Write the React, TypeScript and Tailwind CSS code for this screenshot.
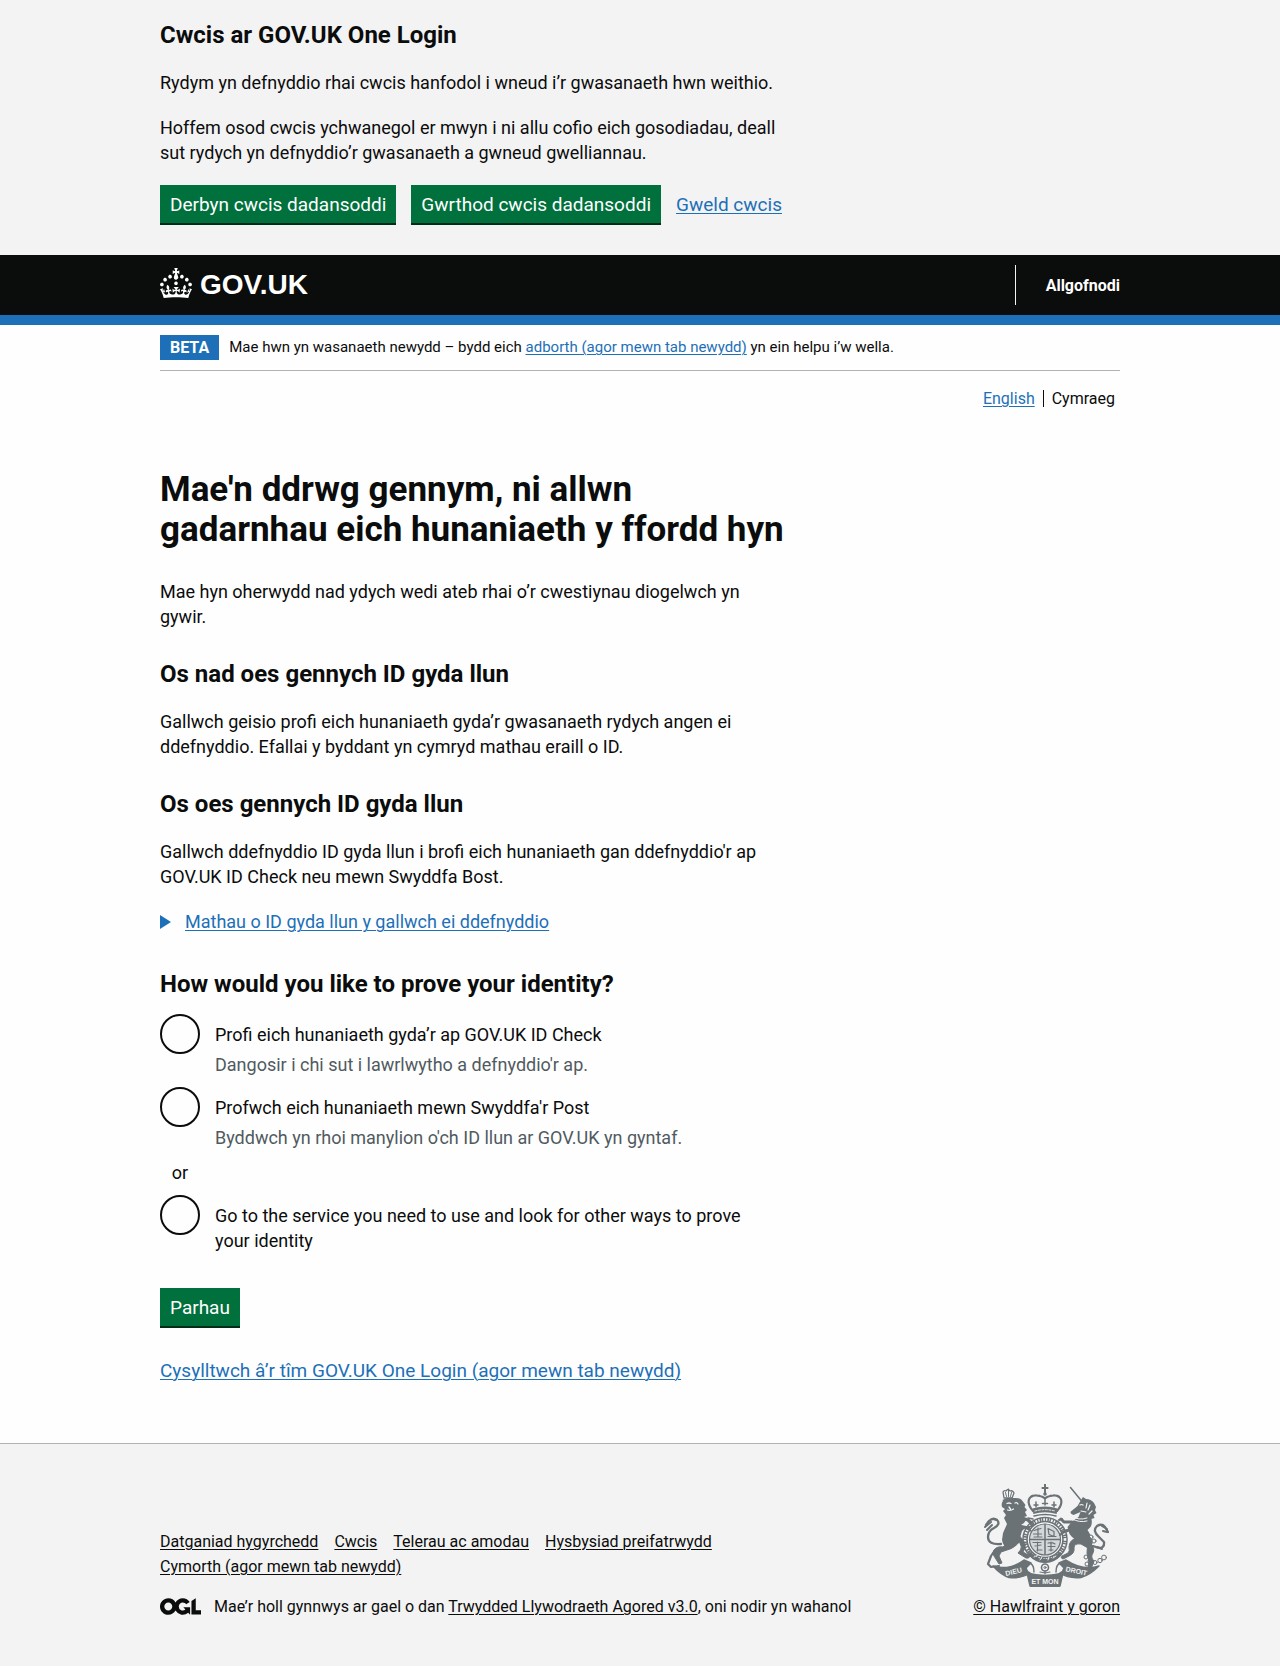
import React from 'react';

const linkClass = 'text-[#1d70b8] underline underline-offset-2 decoration-1 hover:decoration-2';
const footerLinkClass = 'text-[#0b0c0c] underline underline-offset-2 decoration-1';

function Crown() {
  return (
    <svg viewBox="0 0 32 30" width="32" height="30" fill="currentColor" aria-hidden="true">
      <path
        fillRule="evenodd"
        d="M22.6 10.4c-1 .4-2-.1-2.4-1-.4-.9.1-2 1-2.4.9-.4 2 .1 2.4 1s-.1 2-1 2.4m-5.9 6.7c-.9.4-2-.1-2.4-1-.4-.9.1-2 1-2.4.9-.4 2 .1 2.4 1s-.1 2-1 2.4m10.8-3.7c-1 .4-2-.1-2.4-1-.4-.9.1-2 1-2.4.9-.4 2 .1 2.4 1s0 2-1 2.4m3.3 4.8c-1 .4-2-.1-2.4-1-.4-.9.1-2 1-2.4.9-.4 2 .1 2.4 1s-.1 2-1 2.4M17 4.7l2.3 1.2V2.5l-2.3.7-.2-.2.9-3h-3.4l.9 3-.2.2c-.1.1-2.3-.7-2.3-.7v3.4L15 4.7c.1.1.1.2.2.2l-1.3 4c-.1.2-.1.4-.1.6 0 1.1.8 2 1.9 2.2h.7c1-.2 1.9-1.1 1.9-2.1 0-.2 0-.4-.1-.6l-1.3-4c-.1-.2 0-.2.1-.3m-7.6 5.7c.9.4 2-.1 2.4-1 .4-.9-.1-2-1-2.4-.9-.4-2 .1-2.4 1s0 2 1 2.4m-5 3c.9.4 2-.1 2.4-1 .4-.9-.1-2-1-2.4-.9-.4-2 .1-2.4 1s.1 2 1 2.4m-3.2 4.8c.9.4 2-.1 2.4-1 .4-.9-.1-2-1-2.4-.9-.4-2 .1-2.4 1s0 2 1 2.4m14.8 11c4.4 0 8.6.3 12.3.8 1.1-4.5 2.4-7 3.7-8.8l-2.5-.9c.2 1.3.3 1.9 0 2.7-.4-.4-.8-1.1-1.1-2.3l-1.2 4c.7-.5 1.3-.8 2-.9-1.1 2.5-2.6 3.1-3.5 3-1.1-.2-1.7-1.2-1.5-2.1.3-1.2 1.5-1.5 2.1-.1 1.1-2.3-.8-3-2-2.3 1.9-1.9 2.1-3.5.6-5.6-2.1 1.6-2.1 3.2-1.2 5.5-1.2-1.4-3.2-.6-2.5 1.6.9-1.4 2.1-.5 1.9.8-.2 1.1-1.7 2.1-3.5 1.9-2.7-.2-2.9-2.1-2.9-3.6.7-.1 1.9.5 2.9 1.9l.4-4.3c-1.1 1.1-2.1 1.4-3.2 1.4.4-1.2 2.1-3 2.1-3h-5.4s1.7 1.9 2.1 3c-1.1 0-2.1-.2-3.2-1.4l.4 4.3c1-1.4 2.2-2 2.9-1.9-.1 1.5-.2 3.4-2.9 3.6-1.9.2-3.4-.8-3.5-1.9-.2-1.3 1-2.2 1.9-.8.7-2.3-1.2-3-2.5-1.6.9-2.2.9-3.9-1.2-5.5-1.5 2-1.3 3.7.6 5.6-1.2-.7-3.1 0-2 2.3.6-1.4 1.8-1.1 2.1.1.2.9-.3 1.9-1.5 2.1-.9.2-2.4-.5-3.5-3 .6 0 1.2.3 2 .9l-1.2-4c-.3 1.1-.7 1.9-1.1 2.3-.3-.8-.2-1.4 0-2.7l-2.9.9C1.3 23 2.6 25.5 3.7 30c3.7-.5 7.9-.8 12.3-.8"
      />
    </svg>
  );
}

function OglLogo() {
  return (
    <svg viewBox="0 0 483.2 195.7" width="41" height="17" fill="currentColor" className="shrink-0" aria-hidden="true">
      <path d="M421.5 142.8V.1l-50.7 32.3v161.1h112.4v-50.7zm-122.3-9.6A47.12 47.12 0 0 1 221 97.8c0-26 21.1-47.1 47.1-47.1 16.7 0 31.4 8.7 39.7 21.8l42.7-27.2A97.63 97.63 0 0 0 268.1 0c-36.5 0-68.3 20.1-85.1 49.7A98 98 0 0 0 97.8 0C43.9 0 0 43.9 0 97.8s43.9 97.8 97.8 97.8c36.5 0 68.3-20.1 85.1-49.7a97.76 97.76 0 0 0 149.6 25.4l19.4 22.2h3v-87.8h-80l24.3 27.5zM97.8 145c-26 0-47.1-21.1-47.1-47.1s21.1-47.1 47.1-47.1 47.1 21.1 47.1 47.1S123.8 145 97.8 145" />
    </svg>
  );
}

function Crest() {
  return (
    <svg viewBox="0 0 125 103" width="125" height="103" fill="none" stroke="#6b7276" strokeLinecap="round" strokeLinejoin="round" aria-hidden="true">
      {/* royal crown */}
      <g>
        <path d="M61 0.5v9M58.4 4h5.2" strokeWidth="2" />
        <circle cx="61" cy="10" r="1.8" fill="#6b7276" stroke="none" />
        <path d="M49 27C42 19 44 12 51 11.500c5-.3 9 2 10 3 1-1 5-3.300 10-3 7 .5 9 7.500 2 15.500" strokeWidth="2.200" strokeDasharray="2.600 .5" />
        <path d="M61 14v7M58.500 19.500h5M52 18v5M50 21h4M70 18v5M68 21h4" strokeWidth="1.500" />
        <path d="M48.500 24.500q12.500-4 25 0l-.8 5.500q-11.700-3.500-23.400 0z" fill="#6b7276" stroke="none" />
        <path d="M51 27q10-2.700 20 0" stroke="#f3f3f3" strokeWidth=".9" strokeDasharray="2 1.500" />
        <path d="M50 32q11-3 22 0" strokeWidth="1.500" />
      </g>
      {/* garter and shield */}
      <circle cx="61" cy="55.500" r="20" strokeWidth="5.600" />
      <circle cx="61" cy="55.500" r="20" stroke="#f3f3f3" strokeWidth="2.600" strokeLinecap="butt" strokeDasharray="1.300 1.600 .7 1.300 1.800 1.200" />
      <circle cx="61" cy="55.500" r="15.500" fill="#d5d8d9" strokeWidth="1.200" />
      <path d="M61 40.500v30M46 55.500h30" strokeWidth="1.500" />
      <path d="M50 46.500l7-2M49.500 50h8M50 53h8M64 44.500l6 3v5l-5-2zM64 52.500h8M49 58.500h8M51 62l6-1M53 66h5M64 59q4-1 7 1M64 62.500h7M65 66h4M67 58v9M53.500 58v9M54 44v9" strokeWidth="1.200" />
      <path d="M46 70q7 7.500 15 7 8 .5 15-7" strokeWidth="4" />
      <path d="M50 73l4-2M56 76l2-3M64 76l1-3M69 74l3-2" stroke="#f3f3f3" strokeWidth=".9" />
      {/* lion */}
      <g>
        <path d="M19 8q1-2 3-1 2-3 4 0 3-1 4 2l-2 5h-8z" strokeWidth="1.300" />
        <path d="M21.500 8.500l1 4M24.500 6v6.500M27.500 8.500l-1 4M24.500 5v1" strokeWidth="1" />
        <path d="M18.500 16q5-3 11-2 7-.5 9 3l3 4-1 2 2.500 3-2 2 2 4-3 1 2 3-2 3-3 2 4 3-3 3-2 7q-3 2-4 5-2 5-7 6-6-2-7-9l1-7 4-9-3-6 2-3-3-4 2-2-3-2q-1-4 1-6z" fill="#6b7276" stroke="none" />
        <path d="M23 19.500q2-1 4 0M31 19q2-1 3 1M23.500 26q3 1 6-1M25 23l1.500 2" stroke="#f3f3f3" strokeWidth="1.300" />
        <path d="M27 50q-1 8-8 13-6-1-9 3-2 3 0 6l5 8 3-1-3-7 2-4 6-2q8-2 13-9z" fill="#6b7276" strokeWidth="1" />
        <path d="M27 50l6 6q8 7 1 13l8 5q3 1 4-2l-7-4q5-7-1-13l-4-5z" fill="#6b7276" strokeWidth="1" />
        <path d="M17 60Q4 61 4 53q0-6 6-9 7-4 3-8-4-3-8 1l-3 4" strokeWidth="2.300" />
        <path d="M1 43l6-5M3 46l5-5M13 36l-4-1" strokeWidth="2" />
        <path d="M35 33l9 3 3 3M35 42l9 2" strokeWidth="3.200" />
        <path d="M44 34l5 1M47 39l2 2M44 44l3 3M44 43l4-1" strokeWidth="1.600" />
        <path d="M11 66l-4 6-3 8 3 3 8-1" strokeWidth="2.200" />
      </g>
      {/* unicorn */}
      <g>
        <path d="M86.500 3.500L98 17.500" strokeWidth="1.500" />
        <path d="M97 16l2-3 3 2q5 0 8 4l2 4-1 3 1.500 3-3 2 1 3-3 1q1 5-1 8l-3 3 3 5q-4 5-9 6-8-1-12-7l-2-7 4-5 7-5 2-5-7 3-2-1q-2-2 0-3l6-5z" fill="#6b7276" stroke="none" />
        <path d="M96 21q2-1 3 0M103 19l-1 5M106 21l-2 5M108 27l-3 3M97 27l5 1" stroke="#f3f3f3" strokeWidth="1.200" />
        <path d="M87 32q8 5 16 2M88 35q8 4 15 2" stroke="#f3f3f3" strokeWidth="1" />
        <path d="M88 38l-8 0-3-3M88 45l-9 3" strokeWidth="3" />
        <path d="M78 35l-3 1M79 48l-3 3" strokeWidth="2" />
        <path d="M94 50l10 1q5 4 4 9l-4 4-7-4q-7-1-7 4 1 5-5 8l-6 3q-3-1-1-3l6-3q2-2 1-6 0-7 9-10z" fill="#6b7276" strokeWidth="1" />
        <path d="M104 58q8 5 5 11-3 4 1 8l-3 8-3 1 1-8-2-9q0-4 1-8z" fill="#6b7276" strokeWidth="1" />
        <path d="M109 62q12 5 11-4l-5-5q-7-6-2-11 5-3 8 1l3 5" strokeWidth="2.300" />
        <path d="M118 42l5 3M119 47l4 1M113 63l5 2" strokeWidth="2" />
        <g strokeWidth="1">
          <circle cx="102" cy="73" r="2" /><circle cx="106" cy="77" r="2" /><circle cx="111" cy="78.500" r="2" />
          <circle cx="116" cy="76.500" r="2.200" /><circle cx="120" cy="73.500" r="2.400" /><circle cx="103" cy="80" r="2" />
          <circle cx="107" cy="53" r="2" /><circle cx="110" cy="57" r="2" />
        </g>
      </g>
      {/* motto scroll */}
      <g strokeWidth="1.400" fill="#6b7276">
        <path d="M9 82q16 5 31-6l7 3-5 5q1 4 4 5-9 6-21 4.500-8-2.500-16-11.500z" />
        <path d="M115 82q-16 5-33-6l-7 3 5 5q-1 4-4 5 9 6 21 4.500 9-2.500 18-11.500z" />
        <path d="M43 89q18 5 36 0l-3 13q-15 3-30 0z" />
        <path d="M46 79q4 2 4 9M76 79q-4 2-4 9" fill="none" />
      </g>
      <g fill="#f3f3f3" stroke="none" fontFamily="Liberation Sans, sans-serif" fontWeight="700" fontSize="7">
        <text x="30" y="90" textAnchor="middle" transform="rotate(-14 30 89)">DIEU</text>
        <text x="92" y="89.500" textAnchor="middle" transform="rotate(12 92 89)">DROIT</text>
        <text x="61" y="99.500" textAnchor="middle">ET MON</text>
      </g>
      <circle cx="61" cy="83.500" r="3.500" strokeWidth="1.600" />
      <circle cx="61" cy="83.500" r="1" strokeWidth="1" />
      <path d="M61 87v3M56 88l5 1 5-1" strokeWidth="1.200" />
    </svg>
  );
}

function Button({ children, type = 'button' }: { children: React.ReactNode; type?: 'button' | 'submit' }) {
  return (
    <button type={type} className="h-[38px] bg-[#00703c] px-[10px] text-[19px] leading-[19px] text-white shadow-[0_2px_0_#002d18]">
      {children}
    </button>
  );
}

function Heading({ children }: { children: React.ReactNode }) {
  return <h2 className="mb-5 text-[24px] leading-[30px] font-bold">{children}</h2>;
}

function Option({ id, label, hint }: { id: string; label: string; hint?: string }) {
  return (
    <div className="flex gap-[15px]">
      <input
        type="radio"
        name="identity"
        id={id}
        aria-describedby={hint ? id + '-hint' : undefined}
        className="size-10 shrink-0 appearance-none rounded-full border-2 border-[#0b0c0c] checked:border-[12px]"
      />
      <div className="pt-2 pr-[15px]">
        <label htmlFor={id} className="block">{label}</label>
        {hint && <p id={id + '-hint'} className="pt-[5px] text-[#505a5f]">{hint}</p>}
      </div>
    </div>
  );
}

const container = 'mx-5 min-[1020px]:mx-auto max-w-[960px]';

export default function App() {
  return (
    <div className="bg-[#f3f3f3] font-['Roboto',sans-serif] text-[18px] leading-[25px] text-[#0b0c0c]">
      <section aria-label="Cwcis ar GOV.UK One Login" className="pt-5 pb-[30px]">
        <div className={container}>
          <div className="max-w-[630px]">
            <Heading>Cwcis ar GOV.UK One Login</Heading>
            <p className="mb-5">Rydym yn defnyddio rhai cwcis hanfodol i wneud i’r gwasanaeth hwn weithio.</p>
            <p className="mb-5">
              Hoffem osod cwcis ychwanegol er mwyn i ni allu cofio eich gosodiadau, deall sut rydych yn defnyddio’r gwasanaeth a gwneud gwelliannau.
            </p>
          </div>
          <div className="flex flex-wrap items-center gap-x-[15px] gap-y-3 pb-[2px]">
            <Button>Derbyn cwcis dadansoddi</Button>
            <Button>Gwrthod cwcis dadansoddi</Button>
            <a href="#cwcis" className={'text-[19px] ' + linkClass}>Gweld cwcis</a>
          </div>
        </div>
      </section>

      <header className="border-b-[10px] border-[#1d70b8] bg-[#0b0c0c] text-white">
        <div className={container}>
          <div className="flex h-[60px] items-center justify-between">
            <a href="#gov" aria-label="GOV.UK" className="flex items-center gap-2 pb-1">
              <Crown />
              <span className="pt-1 font-['Liberation_Sans',sans-serif] text-[28px] leading-[30px] font-bold">GOV.UK</span>
            </a>
            <nav className="flex h-10 items-center border-l border-[#f3f3f3] pl-[30px]">
              <a href="#allgofnodi" className="text-[16px] font-bold">Allgofnodi</a>
            </nav>
          </div>
        </div>
      </header>

      <div className="bg-[#fefefe]">
        <div className={container}>
          <div className="flex items-center gap-[10px] border-b border-[#b1b4b6] py-[10px] text-[15px]">
            <strong className="bg-[#1d70b8] px-[10px] text-[16px] text-white">BETA</strong>
            <span>
              Mae hwn yn wasanaeth newydd – bydd eich <a href="#adborth" className={linkClass}>adborth (agor mewn tab newydd)</a> yn ein helpu i’w wella.
            </span>
          </div>
          <nav aria-label="Iaith" className="flex justify-end pt-[15px] pr-[5px] text-[16px]">
            <a href="#en" className={linkClass}>English</a>
            <span className="mx-2 my-1 w-px bg-[#0b0c0c]" />
            <span>Cymraeg</span>
          </nav>

          <main className="pt-[59px] pb-[60px]">
            <div className="max-w-[630px]">
              <h1 className="mb-[29px] text-[35px] leading-[40px] font-bold">
                Mae'n ddrwg gennym, ni allwn gadarnhau eich hunaniaeth y ffordd hyn
              </h1>
              <p className="mb-[30px]">Mae hyn oherwydd nad ydych wedi ateb rhai o’r cwestiynau diogelwch yn gywir.</p>
              <Heading>Os nad oes gennych ID gyda llun</Heading>
              <p className="mb-[30px]">
                Gallwch geisio profi eich hunaniaeth gyda’r gwasanaeth rydych angen ei ddefnyddio. Efallai y byddant yn cymryd mathau eraill o ID.
              </p>
              <Heading>Os oes gennych ID gyda llun</Heading>
              <p className="mb-5">
                Gallwch ddefnyddio ID gyda llun i brofi eich hunaniaeth gan ddefnyddio'r ap GOV.UK ID Check neu mewn Swyddfa Bost.
              </p>
              <details className="mb-[35px]">
                <summary className="flex cursor-pointer list-none items-center gap-[14px] text-[#1d70b8]">
                  <svg width="11" height="14" viewBox="0 0 11 14" fill="currentColor" aria-hidden="true">
                    <path d="M0 0l11 7-11 7z" />
                  </svg>
                  <span className={linkClass}>Mathau o ID gyda llun y gallwch ei ddefnyddio</span>
                </summary>
              </details>

              <form onSubmit={(e) => e.preventDefault()}>
                <fieldset className="mb-[30px]">
                  <legend className="mb-[15px] text-[24px] leading-[30px] font-bold">How would you like to prove your identity?</legend>
                  <div className="flex flex-col gap-[10px] pb-[5px]">
                    <Option id="ap" label="Profi eich hunaniaeth gyda’r ap GOV.UK ID Check" hint="Dangosir i chi sut i lawrlwytho a defnyddio'r ap." />
                    <Option id="post" label="Profwch eich hunaniaeth mewn Swyddfa'r Post" hint="Byddwch yn rhoi manylion o'ch ID llun ar GOV.UK yn gyntaf." />
                    <p className="w-10 text-center">or</p>
                    <Option id="arall" label="Go to the service you need to use and look for other ways to prove your identity" />
                  </div>
                </fieldset>
                <Button type="submit">Parhau</Button>
              </form>
              <p className="mt-8 text-[19px]">
                <a href="#cysylltu" className={linkClass}>Cysylltwch â’r tîm GOV.UK One Login (agor mewn tab newydd)</a>
              </p>
            </div>
          </main>
        </div>
      </div>

      <footer className="border-t border-[#b1b4b6] pt-10 pb-12 text-[16px]">
        <div className={container}>
          <div className="flex flex-wrap items-end justify-between gap-10 min-[640px]:flex-nowrap">
            <div>
              <ul className="mb-[15px] flex flex-wrap gap-x-4">
                <li><a href="#hygyrchedd" className={footerLinkClass}>Datganiad hygyrchedd</a></li>
                <li><a href="#cwcis" className={footerLinkClass}>Cwcis</a></li>
                <li><a href="#telerau" className={footerLinkClass}>Telerau ac amodau</a></li>
                <li><a href="#preifatrwydd" className={footerLinkClass}>Hysbysiad preifatrwydd</a></li>
                <li><a href="#cymorth" className={footerLinkClass}>Cymorth (agor mewn tab newydd)</a></li>
              </ul>
              <div className="flex items-center gap-[13px]">
                <OglLogo />
                <span>
                  Mae’r holl gynnwys ar gael o dan <a href="#trwydded" className={footerLinkClass}>Trwydded Llywodraeth Agored v3.0</a>, oni nodir yn wahanol
                </span>
              </div>
            </div>
            <a href="#hawlfraint" className={'flex shrink-0 flex-col items-center gap-[7px] whitespace-nowrap ' + footerLinkClass}>
              <Crest />
              © Hawlfraint y goron
            </a>
          </div>
        </div>
      </footer>
    </div>
  );
}
